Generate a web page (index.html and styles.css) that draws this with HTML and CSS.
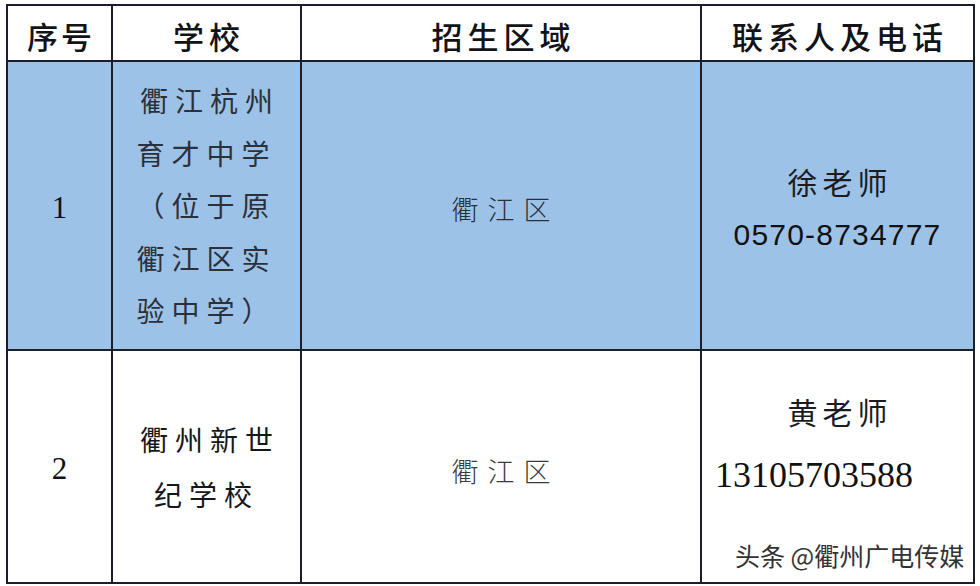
FILE: index.html
```html
<!DOCTYPE html>
<html lang="zh-CN">
<head>
<meta charset="utf-8">
<title>招生区域</title>
<link rel="stylesheet" href="styles.css">
</head>
<body>
<div class="page">
  <table class="sheet">
    <colgroup>
      <col class="c1"><col class="c2"><col class="c3"><col class="c4">
    </colgroup>
    <thead>
      <tr class="head">
        <th><div class="hd tight">序号</div></th>
        <th><div class="hd">学校</div></th>
        <th><div class="hd">招生区域</div></th>
        <th><div class="hd">联系人及电话</div></th>
      </tr>
    </thead>
    <tbody>
      <tr class="r1">
        <td class="num"><div class="n">1</div></td>
        <td class="school"><div class="lines">衢江杭州<br>育才中学<br>（位于原<br>衢江区实<br>验中学）</div></td>
        <td class="area"><div class="a">衢江区</div></td>
        <td class="contact">
          <div class="name">徐老师</div>
          <div class="tel sans">0570-8734777</div>
        </td>
      </tr>
      <tr class="r2">
        <td class="num"><div class="n">2</div></td>
        <td class="school"><div class="lines dark">衢州新世<br>纪学校</div></td>
        <td class="area"><div class="a low">衢江区</div></td>
        <td class="contact c2row">
          <div class="name">黄老师</div>
          <div class="tel serif">13105703588</div>
        </td>
      </tr>
    </tbody>
  </table>
  <div class="mark">头条 @衢州广电传媒</div>
</div>
</body>
</html>
```

FILE: styles.css
```css
html, body {
  margin: 0;
  padding: 0;
  background: #ffffff;
}
.page {
  position: relative;
  width: 980px;
  height: 586px;
  padding: 4px 0 0 6px;
  box-sizing: border-box;
  overflow: hidden;
}
.sheet {
  border-collapse: collapse;
  table-layout: fixed;
  width: 967px;
  font-family: "Noto Sans CJK SC", sans-serif;
  color: #1e2128;
}
.c1 { width: 105px; }
.c2 { width: 189px; }
.c3 { width: 400px; }
.c4 { width: 273px; }
.sheet th, .sheet td {
  border: 2px solid #1b1f2b;
  padding: 0;
  text-align: center;
  vertical-align: middle;
}
.head th {
  height: 54px;
}
.hd {
  font-size: 31px;
  font-weight: 500;
  letter-spacing: 5px;
  text-indent: 5px;
  line-height: 34px;
  margin-top: 5px;
  color: #111317;
}
.hd.tight {
  letter-spacing: 3px;
  text-indent: 3px;
}
.r1 td {
  background: #9dc2e8;
  height: 287px;
}
.r2 td {
  background: #ffffff;
  height: 231px;
}
.n {
  font-family: "Liberation Serif", serif;
  font-size: 31px;
  line-height: 34px;
  color: #111;
}
.r1 .n { margin-top: 4px; }
.r2 .n { margin-top: 4px; }
.school .lines {
  font-size: 28px;
  font-weight: 400;
  letter-spacing: 7px;
  text-indent: 7px;
  line-height: 52.5px;
  color: #2b303a;
}
.school .lines.dark {
  line-height: 55px;
  color: #15171c;
}
.a {
  font-size: 27px;
  font-weight: 300;
  letter-spacing: 9px;
  text-indent: 9px;
  line-height: 32px;
  margin-top: 6px;
  color: #2a2e38;
}
.a.low {
  margin-top: 8px;
  color: #3a3a3a;
}
.contact .name {
  font-size: 30px;
  font-weight: 400;
  letter-spacing: 5px;
  text-indent: 5px;
  line-height: 36px;
  color: #1a1c22;
}
.r1 .contact .name { margin-top: 4px; }
.contact .tel.sans {
  font-family: "Liberation Sans", sans-serif;
  font-size: 30px;
  letter-spacing: 1.2px;
  line-height: 36px;
  margin-top: 18px;
  color: #111;
}
.sheet td.c2row {
  vertical-align: top;
}
.c2row .name {
  margin-top: 42px;
}
.contact .tel.serif {
  font-family: "Liberation Serif", serif;
  font-size: 36px;
  line-height: 40px;
  text-align: left;
  padding-left: 13px;
  margin-top: 26px;
  color: #111;
}
.mark {
  position: absolute;
  left: 735px;
  top: 537px;
  font-family: "Noto Sans CJK SC", sans-serif;
  font-size: 25px;
  font-weight: 400;
  color: #333333;
  text-shadow: 1px 1px 0 #ffffff, -1px 0 0 #ffffff;
  white-space: nowrap;
}
```
